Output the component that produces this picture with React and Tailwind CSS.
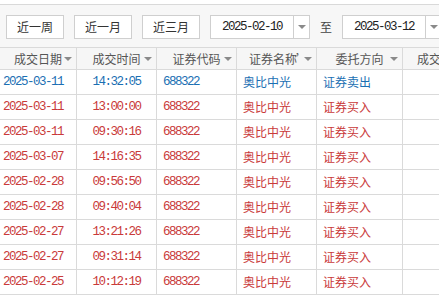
const rows = [
  { date: "2025-03-11", time: "14:32:05", dir: "证券卖出", sell: true },
  { date: "2025-03-11", time: "13:00:00", dir: "证券买入" },
  { date: "2025-03-11", time: "09:30:16", dir: "证券买入" },
  { date: "2025-03-07", time: "14:16:35", dir: "证券买入" },
  { date: "2025-02-28", time: "09:56:50", dir: "证券买入" },
  { date: "2025-02-28", time: "09:40:04", dir: "证券买入" },
  { date: "2025-02-27", time: "13:21:26", dir: "证券买入" },
  { date: "2025-02-27", time: "09:31:14", dir: "证券买入" },
  { date: "2025-02-25", time: "10:12:19", dir: "证券买入" },
];

const cn = "font-['Noto_Sans_CJK_SC',sans-serif] text-[12px]";
const num = "font-['Liberation_Mono','DejaVu_Sans_Mono',monospace] text-[12.5px] tracking-[-1.5px]";

const Caret = () => (
  <span className="inline-block w-0 h-0 border-l-[4px] border-r-[4px] border-t-[4px] border-l-transparent border-r-transparent border-t-[#8a8a8a]" />
);

const HeadCell = ({ w, label, last }) => (
  <div
    className={`relative shrink-0 h-full flex items-center ${w} ${
      last ? "justify-start pl-[14px]" : "justify-center border-r border-[#dadada]"
    }`}
  >
    <span className={`${cn} text-[#555] whitespace-nowrap`}>{label}</span>
    {!last && (
      <span className="absolute right-[4px] top-[9px] flex">
        <Caret />
      </span>
    )}
  </div>
);

const DateBox = ({ value }) => (
  <div className="flex h-[24px] w-[100px] shrink-0 border border-[#cfcfcf] bg-white">
    <div className={`flex-1 flex items-center pl-[11px] text-[#222] ${num}`}>{value}</div>
    <div className="w-[16px] border-l border-[#cfcfcf] flex items-center justify-center">
      <Caret />
    </div>
  </div>
);

export default function App() {
  return (
    <div className="w-[439px] h-[296px] overflow-hidden bg-white">
      <div className="pt-[4px]">
        <div className="h-[43px] border-t border-[#d9d9d9] bg-[#f7f7f7] flex items-start pt-[10px] pl-[6px]">
          {["近一周", "近一月", "近三月"].map((t) => (
            <button
              key={t}
              className={`h-[24px] w-[58px] mr-[10px] shrink-0 border border-[#cfcfcf] bg-white text-[#333] ${cn} flex items-center justify-center`}
            >
              {t}
            </button>
          ))}
          <DateBox value="2025-02-10" />
          <span className={`${cn} text-[#444] mx-[10px] leading-[24px]`}>至</span>
          <DateBox value="2025-03-12" />
        </div>
      </div>
      <div className="w-[520px] border-t border-[#dadada]">
        <div className="flex h-[22px] bg-[#f6f6f6] border-b border-[#dadada]">
          <HeadCell w="w-[77px]" label="成交日期" />
          <HeadCell w="w-[80px]" label="成交时间" />
          <HeadCell w="w-[80px]" label="证券代码" />
          <div className="relative shrink-0 h-full w-[80px] border-r border-[#dadada] flex items-center pl-[12px]">
            <span className={`${cn} text-[#555] whitespace-nowrap`}>证券名称</span>
            <span className={`${cn} text-[#555] -ml-[1px]`}>’</span>
            <span className="absolute right-[4px] top-[9px] flex">
              <Caret />
            </span>
          </div>
          <HeadCell w="w-[86px]" label="委托方向" />
          <HeadCell w="w-[100px]" label="成交数量" last />
        </div>
        {rows.map((r, i) => {
          const c = r.sell ? "text-[#1b6fb3]" : "text-[#c93a3a]";
          return (
            <div key={i} className="flex h-[25px] border-b border-[#dadada]">
              <div className={`w-[77px] shrink-0 border-r border-[#dadada] flex items-center pl-[3px] ${num} ${c}`}>
                {r.date}
              </div>
              <div className={`w-[80px] shrink-0 border-r border-[#dadada] flex items-center justify-center ${num} ${c}`}>
                {r.time}
              </div>
              <div className={`w-[80px] shrink-0 border-r border-[#dadada] flex items-center pl-[6px] ${num} ${c}`}>
                688322
              </div>
              <div className={`w-[80px] shrink-0 border-r border-[#dadada] flex items-center pl-[6px] ${cn} ${c}`}>
                奥比中光
              </div>
              <div className={`w-[86px] shrink-0 border-r border-[#dadada] flex items-center pl-[6px] ${cn} ${c}`}>
                {r.dir}
              </div>
              <div className="w-[100px] shrink-0" />
            </div>
          );
        })}
      </div>
    </div>
  );
}
